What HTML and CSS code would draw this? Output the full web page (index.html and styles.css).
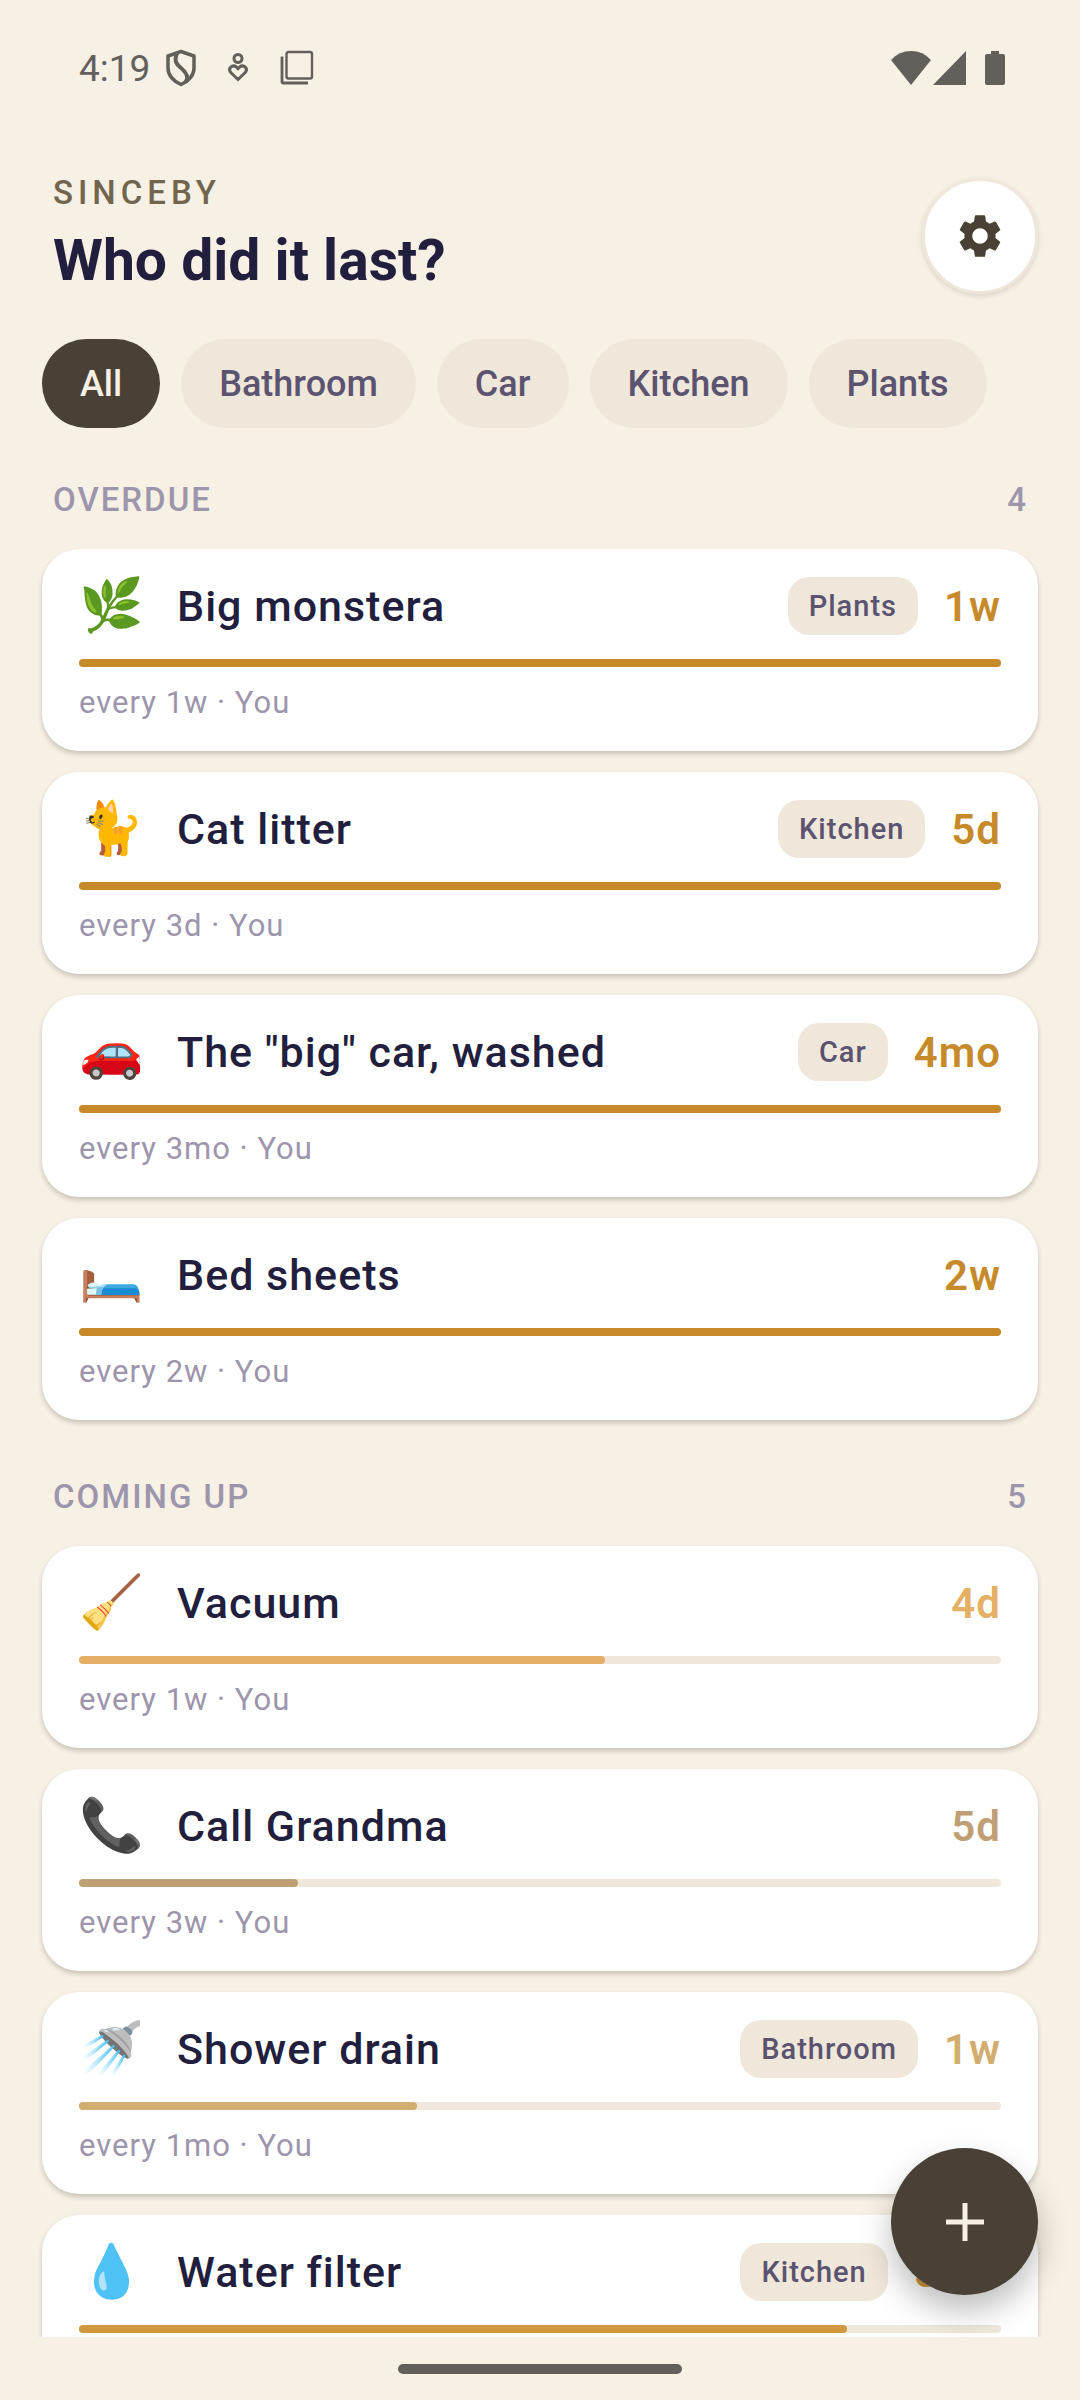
FILE: index.html
```html
<!DOCTYPE html>
<html lang="en">
<head>
<meta charset="UTF-8">
<meta name="viewport" content="width=device-width, initial-scale=1.0">
<title>Sinceby</title>
<link rel="stylesheet" href="styles.css">
</head>
<body>
<div class="screen">
  <div class="status-bar">
    <div class="status-left">
      <span class="clock">4:19</span>
      <svg class="status-icon" viewBox="0 0 38 38"><path d="M19 2.500 32 7v12c0 7-5.500 13-13 16.500C11.500 32 6 26 6 19V7z" fill="none" stroke="currentColor" stroke-width="3.500" stroke-linejoin="round"/><path d="M15 4c-3 8-1 11 4 15s8 8 5 14" fill="none" stroke="currentColor" stroke-width="4"/></svg>
      <svg class="status-icon" viewBox="0 0 38 38"><circle cx="18" cy="9.500" r="4" fill="none" stroke="currentColor" stroke-width="3"/><path d="M18 30.500 10.800 23.500c-3.500-4 1.500-8.500 5.500-5.500l1.700 1.700 1.700-1.700c4-3 9 1.500 5.500 5.500z" fill="none" stroke="currentColor" stroke-width="3"/></svg>
      <svg class="status-icon" viewBox="0 0 38 38"><rect x="8.500" y="3" width="25.500" height="26.500" rx="2" fill="none" stroke="currentColor" stroke-width="2.400"/><path d="M4 7.500v25q0 1.500 1.500 1.500H30" fill="none" stroke="currentColor" stroke-width="2.800"/></svg>
    </div>
    <div class="status-right">
      <svg class="wifi" viewBox="0 0 40 36"><path d="M0 10Q8 1 20 1t20 9L20 35z" fill="currentColor"/></svg>
      <svg class="signal" viewBox="0 0 34 36"><path d="M33 1v34H0z" fill="currentColor"/></svg>
      <svg class="battery" viewBox="0 0 20 36"><path d="M6 1h8v3h4q2 0 2 2v27q0 2-2 2H2q-2 0-2-2V6q0-2 2-2h4z" fill="currentColor"/></svg>
    </div>
  </div>

  <header class="header">
    <div>
      <p class="brand">SINCEBY</p>
      <h1 class="title">Who did it last?</h1>
    </div>
    <button class="settings" aria-label="Settings">
      <svg viewBox="0 0 24 24"><path fill="currentColor" d="M19.140 12.940c.04-.3.060-.610.060-.940 0-.320-.020-.640-.070-.940l2.030-1.580c.180-.140.230-.410.120-.610l-1.920-3.320c-.120-.220-.370-.290-.590-.220l-2.390.960c-.5-.380-1.030-.7-1.620-.940l-.360-2.540c-.040-.240-.240-.410-.480-.410h-3.840c-.240 0-.430.170-.470.410l-.360 2.540c-.590.240-1.130.570-1.620.940l-2.390-.960c-.220-.080-.470 0-.590.220L2.740 8.870c-.120.210-.080.470.120.610l2.030 1.580c-.050.3-.090.630-.090.940s.020.640.070.940l-2.030 1.580c-.180.140-.230.410-.120.610l1.920 3.320c.120.220.370.290.590.220l2.390-.960c.5.380 1.030.7 1.620.940l.36 2.540c.05.240.240.410.480.410h3.840c.240 0 .440-.170.470-.410l.36-2.540c.590-.240 1.130-.560 1.620-.940l2.390.960c.220.080.470 0 .590-.220l1.920-3.320c.120-.220.070-.470-.120-.610zM12 15.600a3.600 3.600 0 1 1 0-7.200 3.600 3.600 0 0 1 0 7.200z"/></svg>
    </button>
  </header>

  <nav class="filters">
    <button class="chip active">All</button>
    <button class="chip">Bathroom</button>
    <button class="chip">Car</button>
    <button class="chip">Kitchen</button>
    <button class="chip">Plants</button>
  </nav>

  <main class="list">
    <section class="group">
      <div class="group-head"><h2>OVERDUE</h2><span>4</span></div>
      <article class="card overdue">
        <div class="row"><span class="emoji">🌿</span><h3>Big monstera</h3><span class="tag">Plants</span><span class="age">1w</span></div>
        <div class="bar"><div class="fill" style="width: 100%"></div></div>
        <p class="meta">every 1w · You</p>
      </article>
      <article class="card overdue">
        <div class="row"><span class="emoji">🐈</span><h3>Cat litter</h3><span class="tag">Kitchen</span><span class="age">5d</span></div>
        <div class="bar"><div class="fill" style="width: 100%"></div></div>
        <p class="meta">every 3d · You</p>
      </article>
      <article class="card overdue">
        <div class="row"><span class="emoji">🚗</span><h3>The "big" car, washed</h3><span class="tag">Car</span><span class="age">4mo</span></div>
        <div class="bar"><div class="fill" style="width: 100%"></div></div>
        <p class="meta">every 3mo · You</p>
      </article>
      <article class="card overdue">
        <div class="row"><span class="emoji">🛏️</span><h3>Bed sheets</h3><span class="age">2w</span></div>
        <div class="bar"><div class="fill" style="width: 100%"></div></div>
        <p class="meta">every 2w · You</p>
      </article>
    </section>

    <section class="group">
      <div class="group-head"><h2>COMING UP</h2><span>5</span></div>
      <article class="card warm">
        <div class="row"><span class="emoji">🧹</span><h3>Vacuum</h3><span class="age">4d</span></div>
        <div class="bar"><div class="fill" style="width: 57.1%"></div></div>
        <p class="meta">every 1w · You</p>
      </article>
      <article class="card calm">
        <div class="row"><span class="emoji">📞</span><h3>Call Grandma</h3><span class="age">5d</span></div>
        <div class="bar"><div class="fill" style="width: 23.8%"></div></div>
        <p class="meta">every 3w · You</p>
      </article>
      <article class="card mild">
        <div class="row"><span class="emoji">🚿</span><h3>Shower drain</h3><span class="tag">Bathroom</span><span class="age">1w</span></div>
        <div class="bar"><div class="fill" style="width: 36.7%"></div></div>
        <p class="meta">every 1mo · You</p>
      </article>
      <article class="card soon">
        <div class="row"><span class="emoji">💧</span><h3>Water filter</h3><span class="tag">Kitchen</span><span class="age">5mo</span></div>
        <div class="bar"><div class="fill" style="width: 83.3%"></div></div>
      </article>
    </section>
  </main>

  <div class="home-bar"><div class="handle"></div></div>
  <button class="fab" aria-label="Add">
    <svg viewBox="0 0 38 38"><path d="M19 0v38M0 19h38" stroke="currentColor" stroke-width="5"/></svg>
  </button>
</div>
</body>
</html>
```
FILE: styles.css
```css
* {
  box-sizing: border-box;
}
body {
  margin: 0;
  background: #f7f0e4;
  color: #221e3d;
  font-family: Roboto, "Noto Color Emoji", sans-serif;
}
h1, h2, h3, p {
  margin: 0;
}
button {
  border: none;
  padding: 0;
  font-family: inherit;
  cursor: pointer;
}
.screen {
  height: 100vh;
  display: flex;
  flex-direction: column;
}

/* status bar */
.status-bar {
  display: flex;
  justify-content: space-between;
  align-items: center;
  height: 136px;
  padding: 0 75px 0 79px;
  color: #63605b;
  flex-shrink: 0;
}
.status-left {
  display: flex;
  align-items: center;
  gap: 20px;
}
.clock {
  font-size: 37px;
  margin-right: -8px;
}
.status-icon {
  width: 38px;
  height: 38px;
}
.status-right {
  display: flex;
  align-items: center;
}
.wifi {
  width: 40px;
  height: 36px;
}
.signal {
  width: 34px;
  height: 36px;
  margin: 0 18px 0 2px;
}
.battery {
  width: 20px;
  height: 36px;
}

/* header */
.header {
  display: flex;
  justify-content: space-between;
  align-items: center;
  padding: 37px 42px 41px 53px;
}
.brand {
  font-size: 33px;
  line-height: 40px;
  font-weight: 500;
  letter-spacing: 5px;
  color: #71654f;
}
.title {
  font-size: 57px;
  line-height: 74px;
  margin-top: 11px;
  font-weight: 700;
}
.settings {
  display: flex;
  align-items: center;
  justify-content: center;
  width: 116px;
  height: 116px;
  border: 3px solid #efe7da;
  border-radius: 50%;
  background: #fff;
  color: #4a4136;
  box-shadow: 0 2px 5px rgba(74, 65, 54, 0.16);
}
.settings svg {
  width: 52px;
  height: 52px;
}

/* filter chips */
.filters {
  display: flex;
  gap: 21px;
  padding: 0 42px;
}
.chip {
  height: 89px;
  padding: 0 38px;
  border-radius: 45px;
  background: #efe7da;
  color: #5b5370;
  font-size: 36px;
  font-weight: 500;
}
.chip.active {
  background: #4a4136;
  color: #f7f0e4;
}

/* list */
.list {
  flex: 1;
  min-height: 0;
  overflow: hidden;
  padding: 52px 42px 0;
}
.group {
  display: flex;
  flex-direction: column;
  gap: 21px;
  margin-bottom: 57px;
}
.group-head {
  display: flex;
  justify-content: space-between;
  padding: 0 12px 8px 11px;
  font-size: 33px;
  line-height: 40px;
  font-weight: 500;
  color: #9c95ac;
}
.group-head h2 {
  font-size: inherit;
  font-weight: inherit;
  letter-spacing: 2px;
}
.card {
  padding: 24px 37px 28px;
  border-radius: 37px;
  background: #fff;
  box-shadow: 0 3px 5px rgba(74, 65, 54, 0.26);
}
.row {
  display: flex;
  align-items: center;
  height: 66px;
}
.emoji {
  width: 98px;
  font-size: 52px;
  line-height: 66px;
}
.row h3 {
  flex: 1;
  font-size: 43px;
  font-weight: 500;
  letter-spacing: 1px;
}
.tag {
  padding: 0 21px;
  border-radius: 21px;
  background: #efe7da;
  color: #5b5370;
  font-size: 29px;
  line-height: 58px;
  font-weight: 500;
  letter-spacing: 1px;
}
.age {
  margin-left: 26px;
  font-size: 42px;
  font-weight: 600;
  letter-spacing: 1px;
}
.bar {
  height: 8px;
  margin: 20px 0 16px;
  border-radius: 4px;
  background: #efe7da;
}
.fill {
  height: 100%;
  border-radius: 4px;
  background: currentColor;
}
.meta {
  font-size: 31px;
  line-height: 40px;
  letter-spacing: 1px;
  color: #9c95ac;
}
.overdue .age, .overdue .bar {
  color: #c78a2b;
}
.warm .age, .warm .bar {
  color: #e5b065;
}
.calm .age, .calm .bar {
  color: #bfa074;
}
.mild .age, .mild .bar {
  color: #d2ad70;
}
.soon .age, .soon .bar {
  color: #d0993f;
}

/* bottom */
.home-bar {
  display: flex;
  justify-content: center;
  align-items: center;
  height: 63px;
  flex-shrink: 0;
}
.handle {
  width: 284px;
  height: 10px;
  border-radius: 5px;
  background: #63605b;
}
.fab {
  position: fixed;
  right: 42px;
  bottom: 105px;
  display: flex;
  align-items: center;
  justify-content: center;
  width: 147px;
  height: 147px;
  border-radius: 50%;
  background: #4a4136;
  color: #f7f0e4;
  box-shadow: 0 16px 32px rgba(0, 0, 0, 0.26);
}
.fab svg {
  width: 38px;
  height: 38px;
}
```
